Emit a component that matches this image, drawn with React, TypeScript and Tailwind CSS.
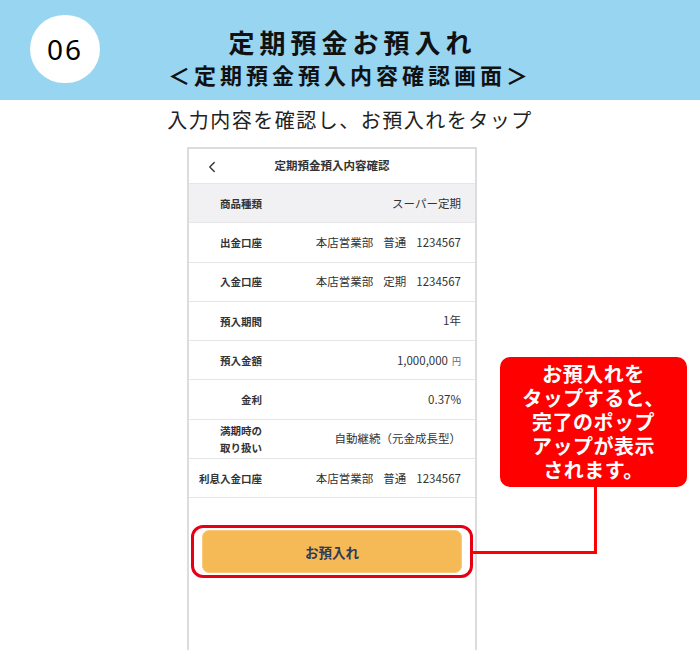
import { ChevronLeft } from 'lucide-react'

const jp = "font-['Noto_Sans_CJK_JP','Noto_Sans',sans-serif]"

type Row = {
  label: string[]
  value: React.ReactNode
  shaded?: boolean
}

const rows: Row[] = [
  { label: ['商品種類'], value: 'スーパー定期', shaded: true },
  { label: ['出金口座'], value: <Account kind="普通" /> },
  { label: ['入金口座'], value: <Account kind="定期" /> },
  { label: ['預入期間'], value: '1年' },
  {
    label: ['預入金額'],
    value: (
      <span>
        1,000,000<span className="ml-[4px] text-[9px] text-[#666]">円</span>
      </span>
    ),
  },
  { label: ['金利'], value: '0.37%' },
  { label: ['満期時の', '取り扱い'], value: '自動継続（元金成長型）' },
  { label: ['利息入金口座'], value: <Account kind="普通" /> },
]

function Account({ kind }: { kind: string }) {
  return (
    <span className="flex gap-[10px]">
      <span>本店営業部</span>
      <span>{kind}</span>
      <span>1234567</span>
    </span>
  )
}

export default function App() {
  return (
    <div className={`relative w-[700px] h-[650px] overflow-hidden bg-white ${jp}`}>
      {/* Step header */}
      <div className="relative h-[100px] bg-[#98d5f1] flex flex-col items-center pt-[26px] text-[#111]">
        <div className="absolute left-[30px] top-[15px] w-[70px] h-[68px] rounded-full bg-white flex items-center justify-center">
          <span className="font-['Noto_Sans',sans-serif] text-[28px] tracking-[2px] text-black">06</span>
        </div>
        <div className="text-[26px] leading-[31px] font-bold tracking-[5px] pl-[5px]">定期預金お預入れ</div>
        <div className="mt-[4px] text-[22px] leading-[27px] font-bold tracking-[4px]">＜定期預金預入内容確認画面＞</div>
      </div>

      <div className="h-[47px] flex justify-center pt-[7px]">
        <span className="text-[20px] leading-[26px] tracking-[1.5px] text-[#222]">入力内容を確認し、お預入れをタップ</span>
      </div>

      {/* Phone screen */}
      <div className="ml-[187px] w-[290px] h-[520px] border-2 border-[#dcdcdc] bg-white">
        <div className="relative h-[35px] border-b border-[#e6e6e6] flex items-center justify-center">
          <ChevronLeft className="absolute left-[14px] top-[9px] w-[18px] h-[18px] text-[#333]" strokeWidth={1.8} />
          <span className="text-[11.5px] font-bold text-[#333]">定期預金預入内容確認</span>
        </div>
        {rows.map((row, i) => (
          <div
            key={i}
            className={`h-[39.3px] border-b border-[#e6e6e6] flex items-center ${row.shaded ? 'bg-[#f1f1f3]' : ''}`}
          >
            <div className="w-[73px] text-right text-[10.5px] leading-[17px] font-bold text-[#333]">
              {row.label.map((l) => (
                <div key={l}>{l}</div>
              ))}
            </div>
            <div className="flex-1 flex justify-end pr-[14px] text-[11.5px] text-[#333]">{row.value}</div>
          </div>
        ))}

        <div className="mt-[27px] mx-[2px] border-[3px] border-[#e60012] rounded-[12px] px-[8px] py-[2px]">
          <button className="w-full h-[43px] rounded-[7px] bg-[#f5b955] border border-[#f8ca79] text-[13.5px] font-bold text-[#2e3a59]">
            お預入れ
          </button>
        </div>
      </div>

      {/* Callout */}
      <div className="absolute left-[500px] top-[357px] w-[187px] h-[130px] rounded-[10px] bg-[#ff0000] flex flex-col items-center justify-center text-white text-[20px] leading-[24px] tracking-[0.5px] font-bold">
        <span className="h-[24px]">お預入れを</span>
        <span className="h-[24px]">タップすると、</span>
        <span className="h-[24px]">完了のポップ</span>
        <span className="h-[24px]">アップが表示</span>
        <span className="h-[24px]">されます。</span>
      </div>
      <div className="absolute left-[594px] top-[486px] w-[3px] h-[68px] bg-[#ff0000]" />
      <div className="absolute left-[472px] top-[551px] w-[125px] h-[3px] bg-[#ff0000]" />
    </div>
  )
}
